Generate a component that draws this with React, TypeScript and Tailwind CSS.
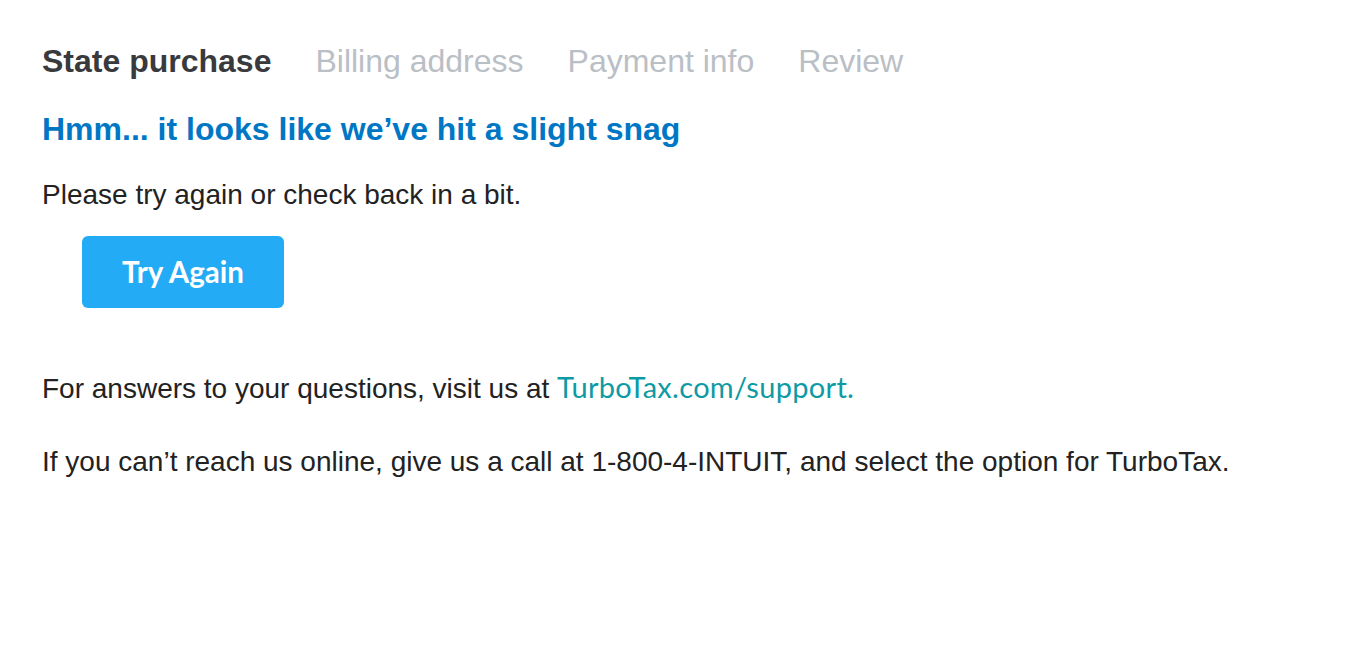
import React from "react";

// Checkout error state: step tabs, snag message, retry button, support info.
const steps = [
  { label: "State purchase", active: true },
  { label: "Billing address", active: false },
  { label: "Payment info", active: false },
  { label: "Review", active: false },
];

const App: React.FC = () => {
  return (
    <div className="min-h-screen bg-white px-[42px] pt-[41px] font-['Liberation_Sans',Arial,sans-serif]">
      <div className="flex items-center gap-[44px] text-[32px] leading-[40px]">
        {steps.map((s) => (
          <span key={s.label} className={s.active ? "font-bold text-[#393a3d]" : "text-[#babec5]"}>
            {s.label}
          </span>
        ))}
      </div>

      <h1 className="mt-[28px] text-[32px] leading-[40px] font-bold text-[#0077c5]">
        Hmm... it looks like we’ve hit a slight snag
      </h1>

      <p className="mt-[30px] text-[28px] leading-[32px] text-[#222]">Please try again or check back in a bit.</p>

      <button className="mt-[25px] ml-[40px] h-[72px] w-[202px] rounded-[6px] bg-[#23abf6] font-['Lato',sans-serif] text-[29.5px] font-bold text-white">
        Try Again
      </button>

      <p className="mt-[63px] text-[28px] leading-[32px] text-[#222]">
        For answers to your questions, visit us at{" "}
        <a href="#" className="font-['Lato',sans-serif] text-[29px] tracking-[0.3px] text-[#0e9aa4]">
          TurboTax.com/support.
        </a>
      </p>

      <p className="mt-[41px] text-[28px] leading-[32px] text-[#222]">
        If you can’t reach us online, give us a call at 1-800-4-INTUIT, and select the option for TurboTax.
      </p>
    </div>
  );
};

export default App;
